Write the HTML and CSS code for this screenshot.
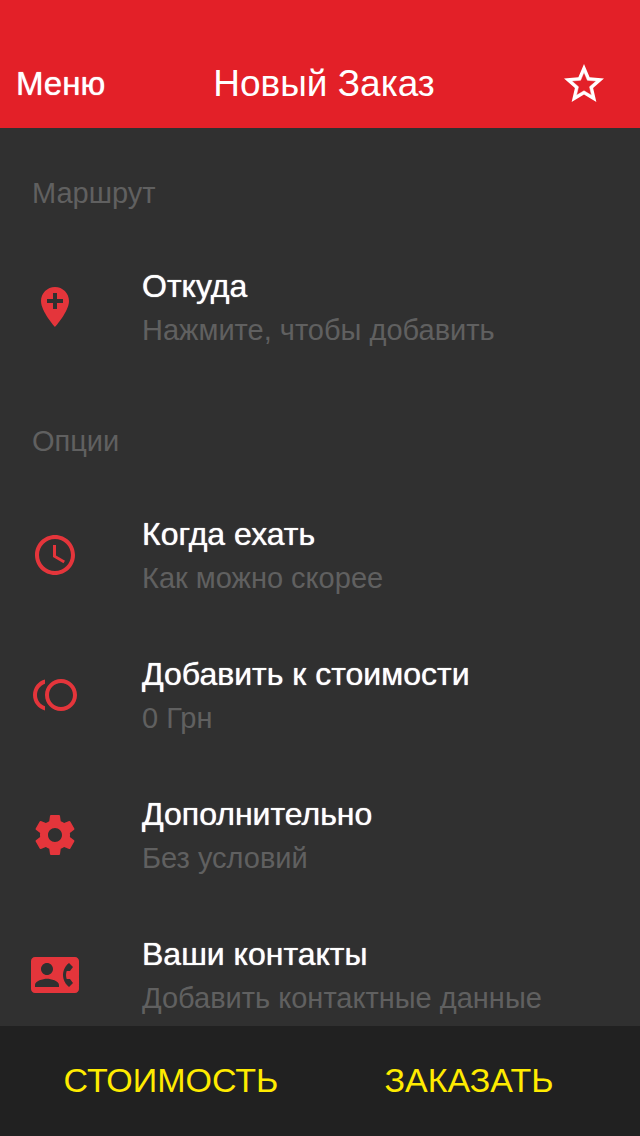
FILE: index.html
```html
<!DOCTYPE html>
<html lang="ru">
<head>
<meta charset="utf-8">
<meta name="viewport" content="width=device-width, initial-scale=1">
<title>Новый Заказ</title>
<link rel="stylesheet" href="styles.css">
</head>
<body>
<div class="app">
  <header class="header">
    <button class="menu" type="button">Меню</button>
    <h1 class="title">Новый Заказ</h1>
    <button class="favorite" type="button" aria-label="Избранное">
      <svg class="icon" viewBox="0 0 24 24"><path d="M22 9.24l-7.19-.62L12 2 9.19 8.63 2 9.24l5.46 4.73L5.82 21 12 17.27 18.18 21l-1.63-7.03L22 9.24zM12 15.4l-3.76 2.27 1-4.28-3.32-2.88 4.38-.38L12 6.1l1.71 4.04 4.38.38-3.32 2.88 1 4.28L12 15.4z"/><path fill="none" stroke="currentColor" stroke-width=".25" d="M12 15.4l-3.76 2.27 1-4.28-3.32-2.88 4.38-.38L12 6.1l1.71 4.04 4.38.38-3.32 2.88 1 4.28z"/></svg>
    </button>
  </header>
  <main class="content">
    <section class="group">
      <h2 class="caption">Маршрут</h2>
      <button class="row" type="button">
        <svg class="icon" viewBox="0 0 24 24"><path d="M12 2C8.14 2 5 5.14 5 9c0 5.25 7 13 7 13s7-7.75 7-13c0-3.86-3.14-7-7-7zm4 8h-3v3h-2v-3H8V8h3V5h2v3h3v2z"/></svg>
        <span class="text"><span class="name">Откуда</span><span class="value">Нажмите, чтобы добавить</span></span>
      </button>
    </section>
    <section class="group">
      <h2 class="caption">Опции</h2>
      <button class="row" type="button">
        <svg class="icon" viewBox="0 0 24 24"><path d="M11.99 2C6.47 2 2 6.48 2 12s4.47 10 9.99 10C17.52 22 22 17.52 22 12S17.52 2 11.99 2zM12 20c-4.42 0-8-3.58-8-8s3.58-8 8-8 8 3.58 8 8-3.58 8-8 8zm.5-13H11v6l5.25 3.15.75-1.23-4.5-2.67z"/></svg>
        <span class="text"><span class="name">Когда ехать</span><span class="value">Как можно скорее</span></span>
      </button>
      <button class="row" type="button">
        <svg class="icon" viewBox="0 0 24 24"><path d="M15 4c-4.42 0-8 3.58-8 8s3.58 8 8 8 8-3.58 8-8-3.58-8-8-8zm0 14c-3.31 0-6-2.69-6-6s2.69-6 6-6 6 2.69 6 6-2.69 6-6 6zM3 12c0-2.61 1.67-4.83 4-5.65V4.26C3.55 5.15 1 8.27 1 12s2.55 6.85 6 7.74v-2.09c-2.33-.82-4-3.04-4-5.65z"/></svg>
        <span class="text"><span class="name">Добавить к стоимости</span><span class="value">0 Грн</span></span>
      </button>
      <button class="row" type="button">
        <svg class="icon" viewBox="0 0 24 24"><path d="M19.43 12.98c.04-.32.07-.64.07-.98s-.03-.66-.07-.98l2.11-1.65c.19-.15.24-.42.12-.64l-2-3.46c-.12-.22-.39-.3-.61-.22l-2.49 1c-.52-.4-1.08-.73-1.69-.98l-.38-2.65C14.46 2.18 14.25 2 14 2h-4c-.25 0-.46.18-.49.42l-.38 2.65c-.61.25-1.17.59-1.69.98l-2.49-1c-.23-.09-.49 0-.61.22l-2 3.46c-.13.22-.07.49.12.64l2.11 1.65c-.04.32-.07.65-.07.98s.03.66.07.98l-2.11 1.65c-.19.15-.24.42-.12.64l2 3.46c.12.22.39.3.61.22l2.49-1c.52.4 1.08.73 1.69.98l.38 2.65c.03.24.24.42.49.42h4c.25 0 .46-.18.49-.42l.38-2.65c.61-.25 1.17-.59 1.69-.98l2.49 1c.23.09.49 0 .61-.22l2-3.46c.12-.22.07-.49-.12-.64l-2.11-1.65zM12 15.5c-1.93 0-3.5-1.57-3.5-3.5s1.57-3.5 3.5-3.5 3.5 1.57 3.5 3.5-1.57 3.5-3.5 3.5z"/></svg>
        <span class="text"><span class="name">Дополнительно</span><span class="value">Без условий</span></span>
      </button>
      <button class="row" type="button">
        <svg class="icon" viewBox="0 0 24 24"><path d="M22 3H2C.9 3 0 3.9 0 5v14c0 1.1.9 2 2 2h20c1.1 0 1.99-.9 1.99-2L24 5c0-1.1-.9-2-2-2zM8 6c1.66 0 3 1.34 3 3s-1.34 3-3 3-3-1.34-3-3 1.34-3 3-3zm6 12H2v-1c0-2 4-3.1 6-3.1s6 1.1 6 3.1v1zm3.85-4h1.64L21 16l-1.99 1.99c-1.31-.98-2.28-2.38-2.73-3.99-.18-.64-.28-1.31-.28-2s.1-1.36.28-2c.45-1.62 1.42-3.01 2.73-3.99L21 8l-1.51 2h-1.64c-.22.63-.35 1.3-.35 2s.13 1.37.35 2z"/></svg>
        <span class="text"><span class="name">Ваши контакты</span><span class="value">Добавить контактные данные</span></span>
      </button>
    </section>
  </main>
  <footer class="actions">
    <button class="action" type="button">СТОИМОСТЬ</button>
    <button class="action" type="button">ЗАКАЗАТЬ</button>
  </footer>
</div>
</body>
</html>
```
FILE: styles.css
```css
* {
  box-sizing: border-box;
}

body {
  margin: 0;
  background: #303030;
  color: #fff;
  font-family: "Liberation Sans", Arial, sans-serif;
}

button {
  margin: 0;
  padding: 0;
  border: 0;
  background: none;
  color: inherit;
  font: inherit;
}

.app {
  display: flex;
  flex-direction: column;
  height: 100vh;
}

.header {
  display: grid;
  grid-template-columns: 1fr auto 1fr;
  align-items: center;
  flex-shrink: 0;
  padding: 40px 8px 0 16px;
  height: 128px;
  background: #e32028;
}

.menu {
  justify-self: start;
  font-size: 33px;
}

.title {
  margin: 0;
  font-size: 37px;
  font-weight: 400;
}

.menu,
.name {
  text-shadow: 0 0 1px currentColor;
}

.favorite {
  justify-self: end;
  padding: 0 24px;
}

.icon {
  display: block;
  flex-shrink: 0;
  width: 48px;
  height: 48px;
  fill: currentColor;
}

.content {
  flex: 1;
  min-height: 0;
  overflow: hidden;
}

.caption {
  margin: 0;
  padding: 47px 32px 25px;
  color: #606060;
  font-size: 29px;
  font-weight: 400;
  line-height: 36px;
}

.row {
  display: flex;
  align-items: center;
  gap: 63px;
  width: 100%;
  height: 140px;
  padding: 2px 31px 0;
  text-align: left;
}

.row .icon {
  color: #e4353b;
}

.text {
  padding-top: 2px;
}

.name,
.value {
  display: block;
  line-height: 44px;
}

.name {
  font-size: 32px;
}

.value {
  color: #606060;
  font-size: 29px;
}

.actions {
  display: grid;
  grid-template-columns: 1fr 1fr;
  flex-shrink: 0;
  height: 110px;
  padding: 0 22px 2px;
  background: #212121;
}

.action {
  color: #ffeb00;
  font-size: 34px;
}
```
